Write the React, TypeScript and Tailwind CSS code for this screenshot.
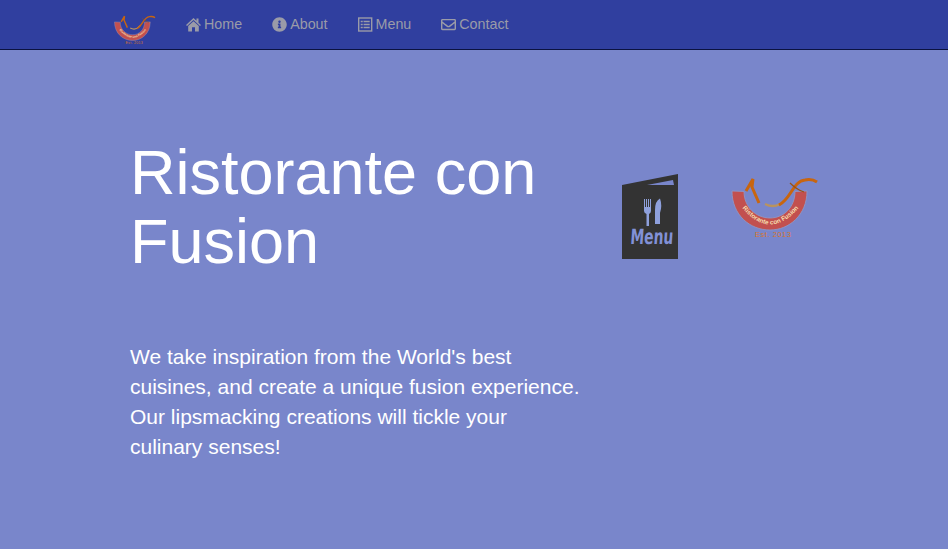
import { FaInfoCircle, FaRegEnvelope } from "react-icons/fa";
import type { ReactNode } from "react";

function HomeIcon() {
  return (
    <svg viewBox="0 0 15 14" className="size-[15px]" fill="currentColor">
      <path d="M7.5 0.5 L10.5 3.3 V1 H12.5 V5.2 L15 7.6 L14 8.6 L7.5 2.6 L1 8.6 L0 7.6Z" />
      <path d="M7.5 3.8 L12.8 8.6 V14 H9 V9.8 H6 V14 H2.2 V8.6Z" />
    </svg>
  );
}

function ListIcon() {
  return (
    <svg viewBox="0 0 15 15" className="size-[15px]" fill="none" stroke="currentColor">
      <rect x="0.7" y="1" width="13" height="13" strokeWidth="1.4" />
      <path d="M2.7 4.5 H11.7 M2.7 7.5 H11.7 M2.7 10.5 H11.7" strokeWidth="1.6" />
      <path d="M5.2 3.5 V12" strokeWidth="0.8" stroke="#303f9f" />
    </svg>
  );
}

const links: { label: string; icon: ReactNode }[] = [
  { label: "Home", icon: <HomeIcon /> },
  { label: "About", icon: <FaInfoCircle className="size-[15px]" /> },
  { label: "Menu", icon: <ListIcon /> },
  { label: "Contact", icon: <FaRegEnvelope className="size-[15px]" /> },
];

function Logo({ className, id }: { className: string; id: string }) {
  return (
    <svg viewBox="0 0 88 62" className={className}>
      <path
        d="M1 14 L13 14.5 C13 30 25 41 39 41 C53 41 64 30 64 14.5 L76 14 C76 38 58 53 39 53 C19 53 1 38 1 14Z"
        fill="#c2504f"
        stroke="#8f9bc9"
        strokeWidth="0.8"
      />
      <path d="M15 14 L22 2 L21 10 L28 26" fill="none" stroke="#c8650f" strokeWidth="3" />
      <path d="M34 27 C42 31 49 29 55 22" fill="none" stroke="#b9935f" strokeWidth="2.4" />
      <path d="M48 28 C60 22 62 4 74 3 C79 2 83 3 86 5" fill="none" stroke="#c8650f" strokeWidth="3" />
      <path d="M59 6 C63 10 67 13 73 15" fill="none" stroke="#9a5212" strokeWidth="1.2" />
      <path id={id} d="M8 27 Q39 68 71 27" fill="none" />
      <text fontFamily="'Liberation Sans', sans-serif" fontSize="6.4" fontWeight="700" fill="#f6dcae">
        <textPath href={`#${id}`} startOffset="50%" textAnchor="middle">
          Ristorante con Fusion
        </textPath>
      </text>
      <text x="24" y="60" fontFamily="'Liberation Sans', sans-serif" fontSize="7.5" fill="#d9752a" textLength="36">
        Est. 2013
      </text>
    </svg>
  );
}

function MenuBook() {
  return (
    <svg viewBox="0 0 56 85" className="h-[85px] w-14">
      <path d="M0 11 L56 0 V85 H0Z" fill="#333333" />
      <path d="M25 11 L51 6 L52 11Z" fill="#7986cb" />
      <path
        d="M22 25 h1 v8 h1 v-8 h1 v8 h1 v-8 h1 v8 h1 v-8 h1 v12 q0 2 -2 3 v12 h-2.5 v-12 q-2.5 -1 -2.5 -3z"
        fill="#8ea0dc"
      />
      <path d="M33 50 v-14 q0 -9 5 -11.5 q2.5 7 0 14.5 v11z" fill="#8ea0dc" />
      <text
        transform="translate(8 70) scale(0.66 1) skewX(-6)"
        fontFamily="'DejaVu Sans', sans-serif"
        fontSize="21"
        fontWeight="700"
        fill="#8291d6"
      >
        Menu
      </text>
    </svg>
  );
}

export default function App() {
  return (
    <div className="min-h-[549px] bg-[#7986cb] font-['Liberation_Sans',Arial,sans-serif] text-white">
      <nav className="h-[50px] border-b border-[#0b1240] bg-[#303f9f]">
        <div className="mx-auto flex h-full w-[720px] items-center">
          <Logo id="nav-logo-arc" className="mt-[10px] h-[30px] w-[42px]" />
          <ul className="ml-[30px] flex gap-[30px] text-[14.3px] text-[#9a9ba8]">
            {links.map((link) => (
              <li key={link.label} className="flex items-center gap-[3px]">
                {link.icon}
                {link.label}
              </li>
            ))}
          </ul>
        </div>
      </nav>
      <main className="mx-auto flex w-[720px] pt-[88px]">
        <div className="ml-[16px] w-[450px]">
          <h1 className="text-[63px] leading-[69px]">Ristorante con Fusion</h1>
          <p className="mt-[66px] text-[21px] leading-[30px] whitespace-nowrap">
            We take inspiration from the World's best
            <br />
            cuisines, and create a unique fusion experience.
            <br />
            Our lipsmacking creations will tickle your
            <br />
            culinary senses!
          </p>
        </div>
        <div className="ml-[42px] mt-[36px] flex h-fit items-start gap-[53px]">
          <MenuBook />
          <Logo id="hero-logo-arc" className="mt-[3px] h-[62px] w-[88px]" />
        </div>
      </main>
    </div>
  );
}
